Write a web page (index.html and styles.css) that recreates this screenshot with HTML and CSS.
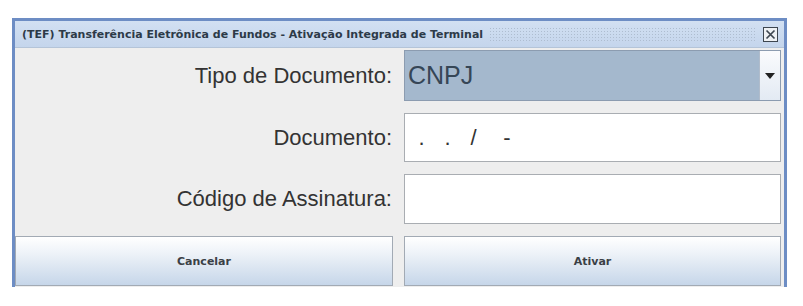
FILE: index.html
```html
<!DOCTYPE html>
<html lang="pt-BR">
<head>
    <meta charset="UTF-8">
    <meta name="viewport" content="width=device-width, initial-scale=1.0">
    <title>Ativação Integrada de Terminal</title>
    <link rel="stylesheet" href="styles.css">
</head>
<body>
    <div class="window">
        <div class="titlebar">
            <span class="title">(TEF) Transferência Eletrônica de Fundos - Ativação Integrada de Terminal</span>
            <span class="dots"></span>
            <span class="close">
                <svg width="15" height="15" viewBox="0 0 15 15">
                    <rect x="0.5" y="0.5" width="14" height="14" fill="#eef1f4" stroke="#3d4650"/>
                    <path d="M3.5 3.5 L11.5 11.5 M11.5 3.5 L3.5 11.5" stroke="#3d4650" stroke-width="1.7"/>
                </svg>
            </span>
        </div>

        <div class="form">
            <label class="label">Tipo de Documento:</label>
            <div class="combo">
                <span class="combo-value">CNPJ</span>
                <span class="combo-arrow">
                    <svg width="10" height="6" viewBox="0 0 10 6"><path d="M0 0 H10 L5 6 Z" fill="#222"/></svg>
                </span>
            </div>

            <label class="label" for="doc">Documento:</label>
            <input class="field mask" id="doc" type="text" value=" .   .   /    -">

            <label class="label" for="sig">Código de Assinatura:</label>
            <input class="field" id="sig" type="text">

            <button class="btn">Cancelar</button>
            <button class="btn">Ativar</button>
        </div>
    </div>
</body>
</html>
```

FILE: styles.css
```css
body {
    margin: 0;
    padding: 18px 0 0 12px;
    background-color: #fff;
    font-family: "Liberation Sans", Arial, sans-serif;
}

.window {
    width: 769px;
    border: 3px solid #6d8dc4;
    border-bottom: none;
    background-color: #eeeeee;
    padding-bottom: 1px;
}

.titlebar {
    display: flex;
    align-items: center;
    height: 26px;
    padding: 0 6px 0 7px;
    background: linear-gradient(#d2e0f2, #c4d5ec);
    border-bottom: 1px solid #b4c4d8;
}

.title {
    font-family: "DejaVu Sans", sans-serif;
    font-weight: bold;
    font-size: 11px;
    color: #2d3a48;
    white-space: nowrap;
}

.dots {
    flex: 1;
    height: 15px;
    margin: 0 8px 0 6px;
    background-image: radial-gradient(circle, #aebdd0 0.8px, transparent 1px);
    background-size: 3px 3px;
}

.close {
    display: flex;
}

.form {
    display: grid;
    grid-template-columns: 378px 377px;
    grid-template-rows: 51px 49px 50px 50px;
    column-gap: 11px;
    row-gap: 12px;
    padding-top: 2px;
}

.label {
    display: flex;
    align-items: center;
    justify-content: flex-end;
    font-size: 22px;
    color: #333;
    padding-right: 1px;
}

.combo {
    display: flex;
    border: 1px solid #8c9cb0;
    background-color: #a4b8cd;
}

.combo-value {
    flex: 1;
    display: flex;
    align-items: center;
    padding-left: 3px;
    font-size: 25px;
    color: #364656;
}

.combo-arrow {
    width: 20px;
    display: flex;
    align-items: center;
    justify-content: center;
    background: linear-gradient(#fafbfd, #e3eaf3);
    border-left: 1px solid #b0bccb;
}

.field {
    margin: 0;
    border: 1px solid #a9adb2;
    background-color: #fff;
    font-family: "Liberation Sans", Arial, sans-serif;
    font-size: 22px;
    color: #333;
    padding: 0 7px;
    box-sizing: border-box;
}

.mask {
    letter-spacing: 0.4px;
}

.btn {
    margin: 0;
    border: 1px solid #a2aab4;
    background: linear-gradient(#ffffff 0%, #edf2f8 35%, #c6d6e9 100%);
    font-family: "DejaVu Sans", sans-serif;
    font-weight: bold;
    font-size: 11px;
    color: #3a3f46;
    cursor: pointer;
}
```
